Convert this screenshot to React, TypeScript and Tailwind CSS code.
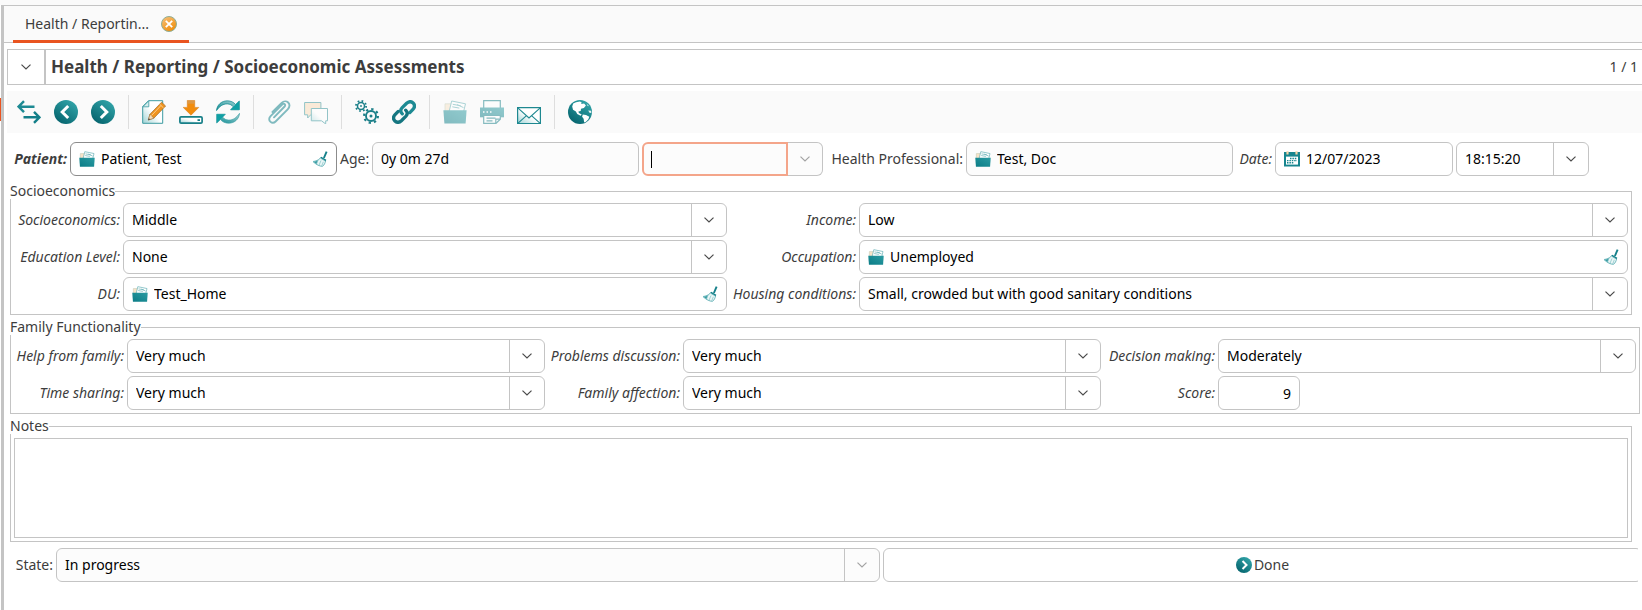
import React from "react";

type IconProps = { className?: string };

function Defs() {
  return (
    <svg width="0" height="0" className="absolute" aria-hidden="true">
      <defs>
        <linearGradient id="teal" x1="0.9" y1="0" x2="0.2" y2="1">
          <stop offset="0" stopColor="#35a9ad" />
          <stop offset="1" stopColor="#04626c" />
        </linearGradient>
        <linearGradient id="folder" x1="1" y1="0" x2="0" y2="1">
          <stop offset="0" stopColor="#2a9ba2" />
          <stop offset="1" stopColor="#0b7c86" />
        </linearGradient>
        <linearGradient id="paper" x1="0" y1="1" x2="1" y2="0">
          <stop offset="0" stopColor="#9ed3d5" />
          <stop offset="0.5" stopColor="#ffffff" />
          <stop offset="1" stopColor="#ffffff" />
        </linearGradient>
        <linearGradient id="arrow" x1="0" y1="1" x2="1" y2="0">
          <stop offset="0" stopColor="#0d8c93" />
          <stop offset="1" stopColor="#a9d6d8" />
        </linearGradient>
        <linearGradient id="orange" x1="0" y1="0" x2="0.6" y2="1">
          <stop offset="0" stopColor="#f7c27d" />
          <stop offset="1" stopColor="#f0900f" />
        </linearGradient>
      </defs>
    </svg>
  );
}

const SwitchIcon = () => (
  <svg viewBox="0 0 24 24" className="size-6" fill="none" stroke="#1d8a93" strokeWidth="2.4">
    <path d="M17.5 6.7H1.8M7 1.2 1.6 6.7 7 12.2" />
    <path d="M6.5 17.3h15.7M17 11.8l5.4 5.5-5.4 5.5" stroke="#137f89" />
  </svg>
);

const PrevIcon = () => (
  <svg viewBox="0 0 24 24" className="size-6">
    <circle cx="12" cy="12" r="12" fill="url(#teal)" />
    <path d="m14.2 6-6 6 6 6" fill="none" stroke="#fff" strokeWidth="3" />
  </svg>
);

const NextIcon = ({ className = "size-6" }: IconProps) => (
  <svg viewBox="0 0 24 24" className={className}>
    <circle cx="12" cy="12" r="12" fill="url(#teal)" />
    <path d="m9.8 6 6 6-6 6" fill="none" stroke="#fff" strokeWidth="3" />
  </svg>
);

const EditIcon = () => (
  <svg viewBox="0 0 24 24" className="size-6">
    <path d="M6.5.7h14.2v22.6H.7V6.5z" fill="url(#paper)" stroke="#3c9aa1" />
    <path d="M6.8.8v6H.9z" fill="#d3ecec" stroke="#3c9aa1" strokeWidth="0.8" />
    <path d="m8 14.2 11.6-12 4 3.8-11.8 12.2L6.3 20z" fill="#f0941e" stroke="#9c6a2c" strokeWidth="0.7" />
    <path d="m8 14.2 3.8 4L6.3 20z" fill="#f7dcb5" stroke="#8a6a40" strokeWidth="0.5" />
    <path d="m6.9 18.2 1.4 1.4-2.3.7z" fill="#444" />
    <path d="m17.6 4.2 4 3.8M9.5 15.5 18.9 5.6" stroke="#fbd39b" strokeWidth="0.9" />
  </svg>
);

const SaveIcon = () => (
  <svg viewBox="0 0 24 24" className="size-6">
    <path d="M8.300.4h7.400v7h4.100L12 15.200 4.200 7.400h4.100z" fill="#f28c0c" stroke="#d98324" strokeWidth="0.6" />
    <path d="M8.600.7h6.800v3H8.600z" fill="#cfa06a" opacity="0.6" />
    <rect x="0.900" y="16.900" width="22.200" height="6.200" rx="1.200" fill="url(#paper)" stroke="#177f88" strokeWidth="1.700" />
    <path d="M18.500 20.100h2.500" stroke="#177f88" strokeWidth="1.800" />
  </svg>
);

const RefreshIcon = () => (
  <svg viewBox="0 0 24 24" className="size-6" strokeWidth="0.700">
    <path d="M.5 10.600C.9 4.900 5.600.8 11.300.8c3.400 0 6.400 1.400 8.300 3.700L23.300 1v8.800h-8.700l2.800-2.900c-1.500-1.900-3.600-3-6.100-3C6.800 3.900 3.500 6.300.5 10.600z" fill="url(#arrow)" stroke="#0f858c" />
    <path d="m19.600 4.500 3.700-3.500v8.800h-8.700z" fill="#10a0a4" />
    <path d="M23.500 13.400c-.4 5.700-5.100 9.800-10.800 9.800-3.400 0-6.400-1.400-8.300-3.700L.7 23v-8.800h8.700l-2.800 2.900c1.500 1.900 3.600 3 6.100 3 4.500 0 7.800-2.400 10.800-6.700z" fill="url(#arrow)" stroke="#3f9fa5" />
    <path d="M.7 23v-8.800h8.700z" fill="#10a0a4" />
  </svg>
);

const ClipIcon = () => (
  <svg viewBox="0 0 24 24" className="size-6 opacity-60" fill="none" stroke="#2e9098">
    <path
      d="M7 17.300 17.600 6.500c1.600-1.600-.6-3.800-2.200-2.200L3.600 16.100c-4 4.200 1.600 8.700 5 5.400L20.700 9.400c5-5.200-1.700-10.900-6-6.500L5.500 12"
      strokeWidth="1.900"
      strokeLinecap="round"
    />
  </svg>
);

const NotesIcon = () => (
  <svg viewBox="0 0 24 24" className="size-6 opacity-50" strokeWidth="1">
    <path d="M.6 2.500h16.300v12.300H6.700l-3 3.200v-3.200H.6z" fill="#fbdcb8" stroke="#2e9098" />
    <path d="M7.300 8.500h16.200v12.300h-1.800V24l-4.200-3.200H7.300z" fill="url(#paper)" stroke="#2e9098" />
  </svg>
);

const GearsIcon = () => (
  <svg viewBox="0 0 24 24" className="size-6" fill="none" stroke="#1b7f88">
    <circle cx="6" cy="6" r="3.500" strokeWidth="1.500" />
    <circle cx="6" cy="6" r="5.100" strokeWidth="1.800" strokeDasharray="1.700 2.300" />
    <circle cx="6" cy="6" r="0.900" fill="#1b7f88" stroke="none" />
    <circle cx="16" cy="16" r="5" strokeWidth="1.900" />
    <circle cx="16" cy="16" r="6.900" strokeWidth="2.200" strokeDasharray="2.300 3.120" />
    <circle cx="16" cy="16" r="1.500" fill="#1b7f88" stroke="none" />
  </svg>
);

const LinkIcon = () => (
  <svg viewBox="0 0 24 24" className="size-6" fill="none" stroke="#157680" strokeWidth="3.300" strokeLinecap="round">
    <path d="M10.300 13.800c-2.100-2.100-1.900-4.200-.3-5.900l4.600-4.600c4.700-4.100 10.500 1.200 6.300 6.200l-3.100 3.100" stroke="#1d8a93" />
    <path d="M13.700 10.200c2.100 2.100 1.900 4.200.3 5.900l-4.600 4.600c-4.700 4.100-10.500-1.200-6.300-6.200l3.100-3.100" />
  </svg>
);

const FolderIcon = ({ className = "size-4" }: IconProps) => (
  <svg viewBox="0 0 24 24" className={className}>
    <path d="M2 12V3.800h7V12z" fill="#f8e3c8" stroke="#b9c4ae" strokeWidth="0.700" />
    <path d="m6 12 2.700-11L22.500 3.800 20.500 12z" fill="#fff" stroke="#5faeb3" strokeWidth="1" />
    <path d="m9.800 4.300 8 1.500M9.300 6.800l7 1.300M14 4.600l6.500 3" stroke="#5faeb3" strokeWidth="1" />
    <path d="M.4 10.300h23.200l-1 13.300H1.400z" fill="url(#folder)" />
  </svg>
);

const PrintIcon = () => (
  <svg viewBox="0 0 24 24" className="size-6 opacity-50">
    <path d="M3.700 8V.7h16.600V8" fill="#fff" stroke="#167f88" strokeWidth="1.200" />
    <path d="M0 7.500h24v9.800H0z" fill="url(#folder)" />
    <path d="M3 12h1.500M6.500 12H8M10 12h1.500" stroke="#fff" strokeWidth="1.500" />
    <path d="M3.700 15.500h16.600v3.700l-4.300 4.100H3.700z" fill="#fff" stroke="#167f88" strokeWidth="1.200" />
    <path d="M20 19.200h-4.200v4M6.500 18.200h9M6.500 20.800h6" fill="none" stroke="#167f88" strokeWidth="1.200" />
  </svg>
);

const MailIcon = () => (
  <svg viewBox="0 0 24 24" className="size-6">
    <path d="M.6 7.600h22.800v16H.6z" fill="url(#paper)" stroke="#1e8890" strokeWidth="1.200" />
    <path d="m.8 7.800 11.200 10.200L23.200 7.800M.8 23.400l8.700-7.700M23.200 23.400l-8.700-7.700" fill="none" stroke="#1e8890" strokeWidth="1.100" />
  </svg>
);

const GlobeIcon = () => (
  <svg viewBox="0 0 24 24" className="size-6">
    <circle cx="12" cy="12" r="12" fill="url(#teal)" />
    <path d="M5.200 3.600 8 2.300l4-.7 1.700.9-.6 1.500 3-.6 1.800 2-2 2.600-2.900.8-.3 2.200-2.300.4.5 1.700 2.800 1.300-1.100 1.400-3.400-1.800-1.300-2.600L5 9.700l-.8-3.300z" fill="#fff" />
    <path d="m14.800 14.600 3.200.3 3.300 1.900-.9 2.500-2.400 2.500-1.800.6-.6-3.700-1.500-2z" fill="#fff" />
    <path d="m18.500 3.600 2.600 2.700-1.600-.5zM20.200 10.400l3 .3.100 2.300-1.800-.2z" fill="#fff" opacity="0.900" />
  </svg>
);

const BroomIcon = () => (
  <svg viewBox="0 0 16 16" className="size-4">
    <path d="M14.600.6 11.900 7" stroke="#137f89" strokeWidth="1.900" />
    <path d="m9.300 5.800 5 2.900-.6 1.500-5.600-3.100z" fill="#137f89" />
    <path d="M8.300 7 13.500 10c-.3 2-1.200 3.800-2.900 5.300-2.700.1-6-1.300-9.600-4.800C3.900 10.500 6.500 9.200 8.300 7z" fill="#eaf6f6" stroke="#4ba5ab" strokeWidth="0.800" />
    <path d="M1 10.500c1.800 0 3.500-.5 5-1.500L4.500 13.300zM9 9.500l-2 4.800M11.300 10.800l-1.500 4" fill="#3a9ca3" stroke="#7cc0c4" strokeWidth="0.700" />
  </svg>
);

const CalendarIcon = () => (
  <svg viewBox="0 0 16 16" className="size-4">
    <path d="M0 1h16v14.500H0z" fill="#17858e" />
    <path d="M2 5.600h12v8H2z" fill="#fff" />
    <path d="M6 7.500h7M3 9.600h10M3 11.800h7" stroke="#17858e" strokeWidth="1.400" strokeDasharray="1.500 0.900" />
    <path d="M3.500.3v3.200M12.500.3v3.200" stroke="#f6d5a8" strokeWidth="2.200" />
  </svg>
);

const Chevron = ({ className = "text-[#4a4a4a]" }: IconProps) => (
  <svg viewBox="0 0 10 6" width="10" height="6" className={className} fill="none" stroke="currentColor" strokeWidth="1.200">
    <path d="M.5.600 5 4.900 9.500.600" />
  </svg>
);

function Label({ id, children, className = "italic" }: { id: string; children: React.ReactNode; className?: string }) {
  return (
    <label htmlFor={id} className={`text-right whitespace-nowrap text-[#3d3d3d] ${className}`}>
      {children}
    </label>
  );
}

type ComboProps = { id: string; value: string; name?: string; muted?: boolean; className?: string };

function Combo({ id, value, name, muted, className = "" }: ComboProps) {
  return (
    <div className={`grid h-[34px] min-w-0 rounded-md border border-[#c4c4c4] ${muted ? "bg-[#fcfcfc]" : "bg-white"} ${className}`}>
      <select
        id={id}
        aria-label={name}
        defaultValue={value}
        className="col-start-1 row-start-1 min-w-0 appearance-none bg-transparent pr-10 pl-2 text-black outline-none"
      >
        <option>{value}</option>
      </select>
      <span className="pointer-events-none col-start-1 row-start-1 flex w-[35px] items-center justify-center justify-self-end border-l border-[#c4c4c4]">
        <Chevron className={muted ? "text-[#a3a3a3]" : "text-[#4a4a4a]"} />
      </span>
    </div>
  );
}

function Entry({
  id,
  value,
  icon,
  iconName,
  clear,
  className = "border-[#c4c4c4] bg-white",
}: {
  id: string;
  value: string;
  icon?: React.ReactNode;
  iconName?: string;
  clear?: boolean;
  className?: string;
}) {
  return (
    <div className={`flex h-[34px] min-w-0 items-center gap-[6px] rounded-md border px-2 ${className}`}>
      {icon && (
        <button type="button" aria-label={iconName}>
          {icon}
        </button>
      )}
      <input id={id} defaultValue={value} className="min-w-0 flex-1 bg-transparent text-black outline-none" />
      {clear && (
        <button type="button" aria-label="Clear">
          <BroomIcon />
        </button>
      )}
    </div>
  );
}

function Group({ title, children, className = "mr-[10px]" }: { title: string; children: React.ReactNode; className?: string }) {
  return (
    <fieldset className={`min-w-0 border border-[#c4c4c4] px-[3px] pt-1 pb-[3px] ${className}`}>
      <legend className="-ml-1 h-4 bg-white leading-4 text-[#3d3d3d]">{title}</legend>
      {children}
    </fieldset>
  );
}

const tools: { name: string; icon: React.ReactNode }[][] = [
  [
    { name: "Switch view", icon: <SwitchIcon /> },
    { name: "Previous", icon: <PrevIcon /> },
    { name: "Next", icon: <NextIcon /> },
  ],
  [
    { name: "New", icon: <EditIcon /> },
    { name: "Save", icon: <SaveIcon /> },
    { name: "Reload", icon: <RefreshIcon /> },
  ],
  [
    { name: "Attachments", icon: <ClipIcon /> },
    { name: "Notes", icon: <NotesIcon /> },
  ],
  [
    { name: "Actions", icon: <GearsIcon /> },
    { name: "Relate", icon: <LinkIcon /> },
  ],
  [
    { name: "Report", icon: <FolderIcon className="size-6 opacity-50" /> },
    { name: "Print", icon: <PrintIcon /> },
    { name: "E-mail", icon: <MailIcon /> },
  ],
  [{ name: "Web", icon: <GlobeIcon /> }],
];

function Toolbar() {
  return (
    <div role="toolbar" className="mt-[6px] ml-[3px] flex h-[42px] items-center gap-[13px] bg-[#fafafa] pl-[10px]">
      {tools.map((group, i) => (
        <React.Fragment key={i}>
          {i > 0 && <span className="h-[34px] w-px bg-[#dedede]" />}
          {group.map((tool) => (
            <button key={tool.name} type="button" aria-label={tool.name}>
              {tool.icon}
            </button>
          ))}
        </React.Fragment>
      ))}
    </div>
  );
}

export default function App() {
  return (
    <div className="flex min-h-screen flex-col overflow-hidden bg-white font-['Noto_Sans','Open_Sans',sans-serif] text-[14px] leading-5 text-[#3d3d3d]">
      <Defs />
      <div className="h-[5px] bg-[#fafafa]" />
      <div className="flex flex-1">
        <div className="w-px pt-[93px]">
          <div className="h-[23px] bg-[#e95420]" />
        </div>
        <div className="min-w-0 flex-1 border-t border-l-[3px] border-[#c4c4c4]">
          <nav className="flex h-[37px] border-b border-[#c4c4c4] bg-[#fafafa] pl-[9px]">
            <div className="-mb-px flex w-[176px] items-center gap-3 border-b-[3px] border-[#e95420] pt-px pl-3">
              <a href="#assessments" className="whitespace-nowrap">Health / Reportin...</a>
              <button type="button" aria-label="Close tab">
                <svg viewBox="0 0 16 16" className="size-4">
                  <circle cx="8" cy="8" r="7.500" fill="url(#orange)" stroke="#8fae96" />
                  <path d="m4.800 4.800 6.400 6.400m0-6.400-6.400 6.400" stroke="#fff" strokeWidth="1.800" />
                </svg>
              </button>
            </div>
          </nav>

          <header className="mt-[6px] ml-[3px] flex h-9 items-center border-y border-l border-[#c4c4c4]">
            <button type="button" aria-label="Menu" className="flex h-full w-[38px] items-center justify-center border-r-2 border-[#c4c4c4]">
              <Chevron />
            </button>
            <h1 className="flex-1 pl-[5px] text-[17px] font-bold">Health / Reporting / Socioeconomic Assessments</h1>
            <span className="pr-1">1 / 1</span>
          </header>

          <Toolbar />

          <form className="mt-[9px] ml-[6px] min-w-0" onSubmit={(e) => e.preventDefault()}>
            <div className="flex items-center gap-[3px]">
              <Label id="patient" className="w-[57px] font-bold italic">Patient:</Label>
              <Entry id="patient" value="Patient, Test" icon={<FolderIcon />} iconName="Open patient" clear className="w-[267px] border-[#8c8c8c] bg-white" />
              <Label id="age" className="w-[29px]">Age:</Label>
              <Entry id="age" value="0y 0m 27d" className="w-[267px] border-[#c4c4c4] bg-[#fcfcfc]" />
              <div className="flex h-[34px] w-[181px] rounded-md bg-[#fcfcfc]">
                <div className="flex flex-1 items-center rounded-l-md border-2 border-[#f4a58a] pl-[7px]">
                  <span className="h-[17px] w-px bg-black" />
                  <select aria-label="Gender" className="min-w-0 flex-1 appearance-none bg-transparent outline-none">
                    <option></option>
                  </select>
                </div>
                <span className="flex w-[35px] items-center justify-center rounded-r-md border border-l-0 border-[#c4c4c4]">
                  <Chevron className="text-[#a3a3a3]" />
                </span>
              </div>
              <Label id="professional" className="w-[137px]">Health Professional:</Label>
              <Entry id="professional" value="Test, Doc" icon={<FolderIcon />} iconName="Open professional" className="w-[267px] border-[#c4c4c4] bg-[#fcfcfc]" />
              <Label id="date" className="w-9 italic">Date:</Label>
              <Entry id="date" value="12/07/2023" icon={<CalendarIcon />} iconName="Open calendar" className="w-[178px] border-[#c4c4c4] bg-white" />
              <Combo id="time" name="Time" value="18:15:20" className="w-[133px]" />
            </div>

            <div className="mt-[7px] flex flex-col gap-1">
              <Group title="Socioeconomics">
                <div className="grid grid-cols-[106px_604fr_126px_769fr] items-center gap-[3px]">
                  <Label id="ses">Socioeconomics:</Label>
                  <Combo id="ses" value="Middle" />
                  <Label id="income">Income:</Label>
                  <Combo id="income" value="Low" />
                  <Label id="education">Education Level:</Label>
                  <Combo id="education" value="None" />
                  <Label id="occupation">Occupation:</Label>
                  <Entry id="occupation" value="Unemployed" icon={<FolderIcon />} iconName="Open occupation" clear />
                  <Label id="du">DU:</Label>
                  <Entry id="du" value="Test_Home" icon={<FolderIcon />} iconName="Open domiciliary unit" clear />
                  <Label id="housing">Housing conditions:</Label>
                  <Combo id="housing" value="Small, crowded but with good sanitary conditions" />
                </div>
              </Group>

              <Group title="Family Functionality" className="mr-[2px]">
                <div className="grid grid-cols-[110px_1fr_132px_1fr_111px_1fr] items-center gap-[3px]">
                  <Label id="help">Help from family:</Label>
                  <Combo id="help" value="Very much" />
                  <Label id="problems">Problems discussion:</Label>
                  <Combo id="problems" value="Very much" />
                  <Label id="decision">Decision making:</Label>
                  <Combo id="decision" value="Moderately" />
                  <Label id="sharing">Time sharing:</Label>
                  <Combo id="sharing" value="Very much" />
                  <Label id="affection">Family affection:</Label>
                  <Combo id="affection" value="Very much" />
                  <Label id="score">Score:</Label>
                  <input id="score" defaultValue="9" className="h-[34px] w-[82px] rounded-md border border-[#c4c4c4] bg-white px-2 text-right text-black outline-none" />
                </div>
              </Group>

              <Group title="Notes">
                <textarea aria-label="Notes" className="block h-[100px] w-full resize-none border border-[#c4c4c4] bg-white p-1 text-black outline-none" />
              </Group>
            </div>

            <div className="mt-[6px] mr-1 flex items-center gap-[3px] overflow-hidden">
              <Label id="state" className="w-[43px]">State:</Label>
              <Combo id="state" value="In progress" muted className="flex-1" />
              <button type="button" className="-mr-1 flex h-[34px] w-[759px] shrink items-center justify-center gap-[2px] rounded-md border border-[#c4c4c4] bg-white">
                <NextIcon className="size-4" />
                Done
              </button>
            </div>
          </form>
        </div>
      </div>
    </div>
  );
}
